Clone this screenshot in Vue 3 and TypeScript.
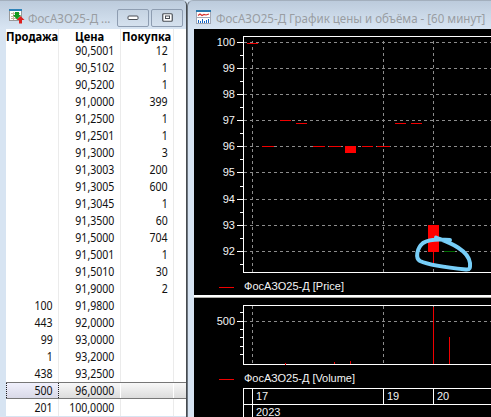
<script setup lang="ts">
interface Quote { sell: string; price: string; buy: string }

const quotes: Quote[] = [
  ['', '90,5001', '12'], ['', '90,5102', '1'], ['', '90,5200', '1'], ['', '91,0000', '399'],
  ['', '91,2500', '1'], ['', '91,2501', '1'], ['', '91,3000', '3'], ['', '91,3003', '200'],
  ['', '91,3005', '600'], ['', '91,3045', '1'], ['', '91,3500', '60'], ['', '91,5000', '704'],
  ['', '91,5001', '1'], ['', '91,5010', '30'], ['', '91,9000', '2'], ['100', '91,9800', ''],
  ['443', '92,0000', ''], ['99', '93,0000', ''], ['1', '93,2000', ''], ['438', '93,2500', ''],
  ['500', '96,0000', ''], ['201', '100,0000', ''],
].map(([sell, price, buy]) => ({ sell, price, buy }))
const selectedPrice = '96,0000'

const levels = [
  { v: 100, y: 42.5 }, { v: 99, y: 68.5 }, { v: 98, y: 94.5 }, { v: 97, y: 120.5 }, { v: 96, y: 146.5 },
  { v: 95, y: 172.5 }, { v: 94, y: 199.5 }, { v: 93, y: 225.5 }, { v: 92, y: 251.5 },
]
const minorTicks = [55.5, 81.5, 107.5, 133.5, 159.5, 186.5, 212.5, 238.5, 264.5, 312.5, 329.5, 337.5, 346.5, 354.5]
const days = [252.5, 383.5, 433.5]
const trades = [
  [247, 43.5, 11], [262, 146.5, 12], [280, 120.5, 11], [296, 123.5, 11], [313, 146.5, 12],
  [329, 146.5, 12], [362, 146.5, 11], [377, 146.5, 13], [395, 123.5, 11], [411, 123.5, 11],
]
</script>

<template>
  <main class="desktop">
    <section class="window book">
      <header class="titlebar">
        <svg class="icon" width="16" height="15" viewBox="0 0 16 15">
          <rect x=".5" y=".5" width="12" height="11" fill="#fff" stroke="#999" />
          <path d="M0 1H13" stroke="#2e83b8" stroke-width="2" />
          <path d="M2 4.5H11M2 7.5H11M2 9.5H11M4.5 3V11" stroke="#c9b6a0" />
          <path d="M6 3H10V6H12L8 10.5L4 6H6Z" fill="#159a22" />
          <path d="M11.5 7L15.5 11H13V14.5H10V11H7.5Z" fill="#dc2020" />
        </svg>
        <h1 class="caption"><span class="squeeze">ФосАЗО25-Д ...</span></h1>
        <button class="control" aria-label="Minimize">
          <svg width="12" height="6"><rect x="1" y="1" width="10" height="3.5" rx="1" fill="#fff" stroke="#484d54" /></svg>
        </button>
        <button class="control" aria-label="Maximize">
          <svg width="11" height="9"><rect x=".75" y=".75" width="9.5" height="7.5" rx="1" fill="#fff" stroke="#484d54" stroke-width="1.2" /><rect x="3.5" y="3" width="4" height="2.5" fill="#fff" stroke="#484d54" /></svg>
        </button>
      </header>
      <div class="table">
        <div class="row head">
          <div class="cell"><span>Продажа</span></div>
          <div class="cell"><span>Цена</span></div>
          <div class="cell"><span>Покупка</span></div>
        </div>
        <div v-for="q in quotes" :key="q.price" class="row" :class="{ selected: q.price === selectedPrice }">
          <div class="cell"><span>{{ q.sell }}</span></div>
          <div class="cell"><span>{{ q.price }}</span></div>
          <div class="cell"><span>{{ q.buy }}</span></div>
        </div>
      </div>
    </section>

    <section class="window chart">
      <header class="titlebar">
        <svg class="icon" width="15" height="14" viewBox="0 0 15 14">
          <rect x=".5" y=".5" width="14" height="13" fill="#fff" stroke="#a3a8b5" />
          <path d="M0 1H15" stroke="#2878ad" stroke-width="2" />
          <path d="M2 5.5L4 4L6 5.5L8 4.5L10 5L13 4" fill="none" stroke="#d6302b" stroke-width="1.2" />
          <path d="M0 7.5H15" stroke="#a3a8b5" />
          <path d="M2.5 10V13M4.5 11V13M6.5 9V13M8.5 11V13M10.5 10V13M12.5 9V13" stroke="#1767c4" />
        </svg>
        <h1 class="caption"><span class="squeeze">ФосАЗО25-Д График цены и объёма - [60 минут]</span></h1>
      </header>
      <svg class="plot" width="297" height="388" viewBox="194 29 297 388">
        <g class="grid">
          <path v-for="l in levels" :key="l.v" :d="`M244 ${l.y}H491`" />
          <path d="M244 321.5H491" />
          <path v-for="x in days" :key="x" :d="`M${x} 41V272M${x} 306V364`" />
        </g>
        <g class="axis">
          <path d="M491 36.5H243.5V272.5H491M491 305.5H243.5V364.5H491" />
          <path v-for="l in levels" :key="l.v" :d="`M237 ${l.y}H243`" />
          <path v-for="y in minorTicks" :key="y" :d="`M240 ${y}H243`" />
          <path d="M237 321.5H243M491 388.5H243.5V417M243 404.5H491M252.5 388V417M383.5 388V404M433.5 388V404" />
        </g>
        <path d="M194 296H491" stroke="#fff" stroke-width="2" />
        <path d="M194 297.5H491" stroke="#aaa9a4" />
        <g class="labels">
          <text v-for="l in levels" :key="l.v" x="235" :y="l.y + 3.5" text-anchor="end">{{ l.v }}</text>
          <text x="235" y="325" text-anchor="end">500</text>
          <text x="244" y="290" textLength="100">ФосАЗО25-Д [Price]</text>
          <text x="244" y="382" textLength="111">ФосАЗО25-Д [Volume]</text>
          <text x="256" y="400">17</text>
          <text x="387" y="400">19</text>
          <text x="437" y="400">20</text>
          <text x="256" y="416">2023</text>
        </g>
        <g class="series">
          <path v-for="[x, y, w] in trades" :key="x" :d="`M${x} ${y}h${w}`" />
          <path d="M219 287.5H234M219 379.5H234M433.5 252V266M433.5 307V364M449.5 337V364M285.5 363V365M334.5 362V364M350.5 361V364" />
        </g>
        <path d="M345 146H356V153H345ZM428 225H439V252H428Z" fill="#f00" />
        <path d="M444 251.5H455" stroke="#006b00" />
        <path class="marker" d="M436 237.5C444 241 468 248 470 263C470 266 471 270 466 269.5C451 268 431 266 420 261C415 258 417 248 423 243C429 239 440 239 450 240" />
      </svg>
    </section>
  </main>
</template>

<style>
body { margin: 0; overflow: hidden; }
</style>

<style scoped>
.desktop { display: flex; width: 491px; height: 417px; background: #d7e4f2; font-family: "Noto Sans", sans-serif; }
.window { box-sizing: border-box; height: 417px; overflow: hidden; border-top: 1px solid #a3afbd; border-radius: 6px 0 0 0; background: linear-gradient(#bccbdc, #d7e4f2 27px); }
.book { width: 187px; padding-left: 6px; border-right: 1px solid #464b50; border-radius: 0 5px 0 0; }
.chart { width: 304px; padding-left: 6px; border-left: 1px solid #6d7680; }
.titlebar { display: flex; align-items: center; box-sizing: border-box; height: 28px; }
.book .titlebar { padding-left: 3px; }
.chart .titlebar { padding-left: 2px; }
.icon { flex: none; margin-top: 3px; }
.caption { flex: 1; min-width: 0; margin: 5px 0 0 3px; font-size: 13px; font-weight: 400; line-height: 20px; color: #999da2; white-space: nowrap; }
.chart .caption { margin-left: 5px; }
.squeeze { display: inline-block; transform: scaleX(.887); transform-origin: left; }
.control { display: grid; place-items: center; flex: none; box-sizing: border-box; width: 32px; height: 18px; margin: 5px 0 0 2px; padding: 0; border: 1px solid #8e9db1; border-radius: 2px; background: linear-gradient(#c5d3e2, #d5e1ee); }
.control:last-child { margin-right: 3px; }
.table { height: 387px; overflow: hidden; background: #fff; color: #111; font-size: 12px; }
.row { display: grid; grid-template-columns: 53px 62px 53px 1fr; height: 17px; line-height: 17px; }
.cell { box-sizing: border-box; overflow: hidden; padding-right: 5.5px; border-right: 1px solid #ebebeb; text-align: right; white-space: nowrap; }
.cell span { display: inline-block; transform: scaleX(.88); transform-origin: right; }
.head { height: 16px; margin-bottom: -3px; font-weight: 700; color: #000; line-height: 16px; }
.head .cell { padding: 0; text-align: left; }
.head .cell span { transform: scaleX(.93); transform-origin: left; }
.head .cell:nth-child(2) { padding-left: 16px; }
.head .cell:nth-child(3) { padding-left: 1px; }
.selected { box-sizing: border-box; border-top: 1px solid #777; border-bottom: 1px solid #777; background: linear-gradient(#f8f8f8, #dcdcdc); line-height: 15px; }
.selected .cell { border-color: #fff; }
.selected .cell:first-child { border-left: 1px dotted #222; border-right: 1px dotted #222; background: linear-gradient(#f0f0fc, #d9d9e7); }
.plot { display: block; background: #000; }
.plot path { shape-rendering: crispEdges; }
.grid path { stroke: #8c8c8c; stroke-dasharray: 3 3; }
.axis path { fill: none; stroke: #fff; }
.labels text { fill: #f4f4f4; font: 11px "Liberation Sans", sans-serif; }
.series path { stroke: #f00000; fill: none; }
.plot .marker { fill: none; stroke: #77cef8; stroke-width: 4; stroke-linecap: round; stroke-linejoin: round; shape-rendering: auto; }
</style>
